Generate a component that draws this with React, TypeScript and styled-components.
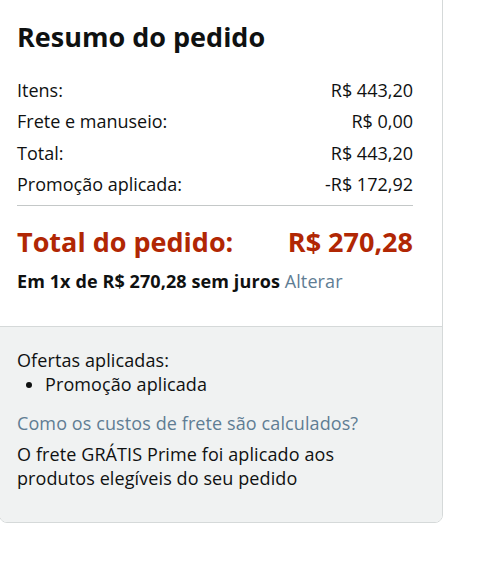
import React from "react";
import styled, { createGlobalStyle } from "styled-components";

const Global = createGlobalStyle`
  html, body { margin: 0; padding: 0; background: #fff; }
  body { font-family: "Open Sans", "Noto Sans", Arial, sans-serif; color: #0f1111; }
`;

const Card = styled.div`
  width: 444px;
  margin: -1px 0 0 -1px;
  border: 1px solid #d5d9d9;
  border-radius: 0 0 8px 8px;
  overflow: hidden;
  box-sizing: border-box;
`;

const Top = styled.div`
  padding: 21px 29px 33px 17px;
  background: #fff;
`;

const Title = styled.h2`
  margin: 0 0 25px;
  font-size: 27px;
  line-height: 32px;
  font-weight: 700;
  color: #0f1111;
`;

const Rows = styled.div`
  display: flex;
  flex-direction: column;
  gap: 7.3px;
`;

const Row = styled.div`
  display: flex;
  justify-content: space-between;
  font-size: 18px;
  line-height: 24px;
`;

const Divider = styled.hr`
  margin: 9px 0 20px;
  border: 0;
  border-top: 1px solid #c4c8c8;
`;

const TotalRow = styled.div`
  display: flex;
  justify-content: space-between;
  font-size: 27px;
  line-height: 32px;
  font-weight: 700;
  color: #b12704;
`;

const Install = styled.div`
  margin-top: 11px;
  font-size: 18px;
  line-height: 24px;
  font-weight: 700;
  letter-spacing: 0.1px;
`;

const Link = styled.a<{ $regular?: boolean }>`
  color: #5f7d94;
  font-weight: ${(p) => (p.$regular ? 400 : "inherit")};
  text-decoration: none;
`;

const Bottom = styled.div`
  background: #f0f2f2;
  border-top: 1px solid #d5d9d9;
  padding: 21px 40px 32px 17px;
  font-size: 18px;
  line-height: 24px;
  letter-spacing: 0.1px;
`;

const List = styled.ul`
  margin: 0 0 15px;
  padding: 0 0 0 28px;
  list-style: disc;
`;

const Para = styled.p`
  margin: 0;
`;

const LinkPara = styled.p`
  margin: 0 0 7px;
`;

export default function App() {
  return (
    <>
      <Global />
      <Card>
        <Top>
          <Title>Resumo do pedido</Title>
          <Rows>
            <Row><span>Itens:</span><span>R$ 443,20</span></Row>
            <Row><span>Frete e manuseio:</span><span>R$ 0,00</span></Row>
            <Row><span>Total:</span><span>R$ 443,20</span></Row>
            <Row><span>Promoção aplicada:</span><span>-R$ 172,92</span></Row>
          </Rows>
          <Divider />
          <TotalRow><span>Total do pedido:</span><span>R$ 270,28</span></TotalRow>
          <Install>
            Em 1x de R$ 270,28 sem juros <Link $regular href="#">Alterar</Link>
          </Install>
        </Top>
        <Bottom>
          <Para>Ofertas aplicadas:</Para>
          <List><li>Promoção aplicada</li></List>
          <LinkPara><Link href="#">Como os custos de frete são calculados?</Link></LinkPara>
          <Para>O frete GRÁTIS Prime foi aplicado aos produtos elegíveis do seu pedido</Para>
        </Bottom>
      </Card>
    </>
  );
}
